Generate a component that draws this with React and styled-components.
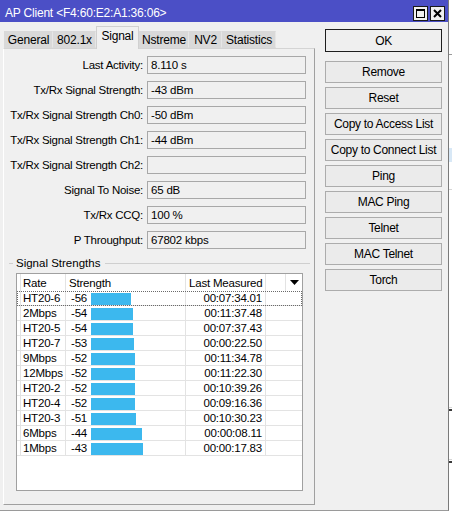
import React from "react";
import styled, { createGlobalStyle } from "styled-components";

const GlobalStyle = createGlobalStyle`
  html, body {
    margin: 0;
    padding: 0;
    background: #ffffff;
  }
  body {
    font-family: "Liberation Sans", Arial, sans-serif;
    font-size: 11px;
    color: #000;
  }
`;

const Desktop = styled.div`
  display: flex;
  width: 452px;
  height: 511px;
  overflow: hidden;
`;

const Window = styled.div`
  display: flex;
  flex-direction: column;
  width: 448px;
  height: 510px;
  background: #f0f0f0;
  border-right: 1px solid #7a7a7a;
  border-bottom: 1px solid #9a9a9a;
`;

const Behind = styled.div`
  flex: 1;
  display: flex;
  flex-direction: column;
  background: #ffffff;
`;

const BehindLine = styled.div`
  margin-top: ${p => p.$top}px;
  height: ${p => p.$h || 1}px;
  background: ${p => p.$color};
`;

const TitleBar = styled.div`
  display: flex;
  align-items: center;
  height: 22px;
  padding: 0 3px 0 5px;
  background: #4b4fc6;
  color: #fff;
  font-size: 12px;
`;

const TitleText = styled.div`
  flex: 1;
  padding-top: 3px;
  white-space: nowrap;
  letter-spacing: -0.2px;
`;

const TitleButton = styled.div`
  width: 13px;
  height: 13px;
  margin-top: 5px;
  margin-left: 2px;
  border: 1px solid #1a1a1a;
  background: #f0f0f0;
  display: flex;
  align-items: center;
  justify-content: center;
`;

const Body = styled.div`
  flex: 1;
  display: flex;
`;

const LeftPane = styled.div`
  display: flex;
  flex-direction: column;
  width: 312px;
  margin-left: 3px;
`;

const TabStrip = styled.div`
  display: flex;
  align-items: flex-end;
  height: 22px;
  margin-top: 4px;
  padding-left: 1px;
  position: relative;
  z-index: 1;
`;

const Tab = styled.div`
  box-sizing: border-box;
  width: ${p => p.$w}px;
  height: ${p => (p.$active ? 23 : 17)}px;
  margin-bottom: ${p => (p.$active ? -1 : 0)}px;
  display: flex;
  align-items: center;
  justify-content: center;
  padding-bottom: ${p => (p.$active ? 4 : 0)}px;
  background: ${p => (p.$active ? "#f0f0f0" : "#d9d9d9")};
  border: 1px solid ${p => (p.$active ? "#d0d0d0" : "#d9d9d9")};
  border-bottom: ${p => (p.$active ? "none" : "1px solid #d9d9d9")};
  border-right: 1px solid ${p => (p.$active ? "#d0d0d0" : "#e6e6e6")};
  font-size: 12px;
  letter-spacing: -0.2px;
  white-space: nowrap;
`;

const Panel = styled.div`
  box-sizing: border-box;
  height: 457px;
  border: 1px solid #d4d4d4;
  border-left-color: #ffffff;
  border-right-color: #a0a0a0;
  border-bottom-color: #a0a0a0;
  padding: 7px 0 0 3px;
  display: flex;
  flex-direction: column;
`;

const FieldList = styled.div`
  display: flex;
  flex-direction: column;
  gap: 7px;
`;

const FieldRow = styled.div`
  display: flex;
  align-items: center;
  height: 18px;
`;

const FieldLabel = styled.div`
  width: 136px;
  text-align: right;
  white-space: nowrap;
  font-size: 11.5px;
  letter-spacing: -0.25px;
`;

const FieldBox = styled.div`
  box-sizing: border-box;
  margin-left: 4px;
  width: 159px;
  height: 18px;
  border: 1px solid #a8a8a8;
  background: #f0f0f0;
  padding: 0 3px;
  display: flex;
  align-items: center;
  font-size: 11.5px;
  letter-spacing: -0.2px;
  white-space: nowrap;
`;

const Group = styled.div`
  margin-top: 7px;
  display: flex;
  flex-direction: column;
`;

const Legend = styled.div`
  display: flex;
  align-items: center;
  height: 14px;
  padding-left: 2px;
  margin-right: 4px;
  font-size: 11.5px;
  white-space: nowrap;
  &::before {
    content: "";
    flex: none;
    width: 4px;
    height: 1px;
    background: #cfcfcf;
    margin-right: 3px;
  }
  &::after {
    content: "";
    flex: 1;
    height: 1px;
    background: #cfcfcf;
    margin-left: 5px;
  }
`;

const Table = styled.div`
  box-sizing: border-box;
  margin: 3px 0 0 9px;
  width: 287px;
  height: 218px;
  border: 1px solid #a0a0a0;
  background: #fff;
  display: flex;
  flex-direction: column;
`;

const HeaderRow = styled.div`
  display: flex;
  height: 17px;
`;

const DataRow = styled.div`
  display: flex;
  height: 15px;
  position: relative;
  ${p =>
    p.$focused &&
    `&::after {
      content: "";
      position: absolute;
      left: 0;
      right: 0;
      top: 0;
      bottom: 0;
      border: 1px dotted #6a6a6a;
      pointer-events: none;
    }`}
`;

const Cell = styled.div`
  box-sizing: border-box;
  width: ${p => p.$w}px;
  flex: ${p => (p.$grow ? 1 : "none")};
  display: flex;
  align-items: center;
  justify-content: ${p => (p.$right ? "flex-end" : "flex-start")};
  padding: ${p => (p.$right ? "0 3px 0 0" : `0 0 0 ${p.$pad ?? 2}px`)};
  border-right: ${p => (p.$last ? "none" : "1px solid #e3e3e3")};
  border-bottom: ${p => (p.$header ? "none" : "1px solid #e3e3e3")};
  white-space: nowrap;
  font-size: 11.5px;
  letter-spacing: -0.2px;
`;

const Value = styled.span`
  width: 20px;
`;

const Bar = styled.div`
  height: 12px;
  margin-top: 1px;
  background: #3cb8ee;
`;

const RightPane = styled.div`
  display: flex;
  flex-direction: column;
  gap: 4px;
  margin-left: 10px;
  padding-top: 7px;
`;

const Button = styled.div`
  box-sizing: border-box;
  width: 117px;
  height: ${p => (p.$default ? 23 : 22)}px;
  margin-bottom: ${p => (p.$default ? 5 : 0)}px;
  border: 1px solid ${p => (p.$default ? "#1e1e1e" : "#acacac")};
  background: ${p => (p.$default ? "#efefef" : "#ebebeb")};
  display: flex;
  align-items: center;
  justify-content: center;
  font-size: 12px;
  letter-spacing: -0.3px;
  white-space: nowrap;
`;

const tabs = [
  ["General", 49],
  ["802.1x", 43],
  ["Signal", 43],
  ["Nstreme", 50],
  ["NV2", 33],
  ["Statistics", 54],
];

const fields = [
  ["Last Activity:", "8.110 s"],
  ["Tx/Rx Signal Strength:", "-43 dBm"],
  ["Tx/Rx Signal Strength Ch0:", "-50 dBm"],
  ["Tx/Rx Signal Strength Ch1:", "-44 dBm"],
  ["Tx/Rx Signal Strength Ch2:", ""],
  ["Signal To Noise:", "65 dB"],
  ["Tx/Rx CCQ:", "100 %"],
  ["P Throughput:", "67802 kbps"],
];

const rates = [
  ["HT20-6", -56, "00:07:34.01"],
  ["2Mbps", -54, "00:11:37.48"],
  ["HT20-5", -54, "00:07:37.43"],
  ["HT20-7", -53, "00:00:22.50"],
  ["9Mbps", -52, "00:11:34.78"],
  ["12Mbps", -52, "00:11:22.30"],
  ["HT20-2", -52, "00:10:39.26"],
  ["HT20-4", -52, "00:09:16.36"],
  ["HT20-3", -51, "00:10:30.23"],
  ["6Mbps", -44, "00:00:08.11"],
  ["1Mbps", -43, "00:00:17.83"],
];

const buttons = [
  "Remove",
  "Reset",
  "Copy to Access List",
  "Copy to Connect List",
  "Ping",
  "MAC Ping",
  "Telnet",
  "MAC Telnet",
  "Torch",
];

function SignalTable() {
  return (
    <Table>
      <HeaderRow>
        <Cell $header $w={4} $pad={0} />
        <Cell $header $w={45}>Rate</Cell>
        <Cell $header $w={120} $pad={3}>Strength</Cell>
        <Cell $header $w={80} $pad={3}>Last Measured</Cell>
        <Cell $header $w={20} />
        <Cell $header $grow $last $pad={4}>
          <svg width="9" height="5" viewBox="0 0 9 5">
            <path d="M0 0h9L4.5 5z" fill="#000" />
          </svg>
        </Cell>
      </HeaderRow>
      {rates.map(([rate, dbm, time], i) => (
        <DataRow key={rate} $focused={i === 0}>
          <Cell $w={4} $pad={0} />
          <Cell $w={45}>{rate}</Cell>
          <Cell $w={120} $pad={5}>
            <Value>{dbm}</Value>
            <Bar style={{ width: Math.round((100 + dbm) * 0.91) }} />
          </Cell>
          <Cell $w={80} $right>{time}</Cell>
          <Cell $grow $last />
        </DataRow>
      ))}
    </Table>
  );
}

export default function App() {
  return (
    <>
      <GlobalStyle />
      <Desktop>
        <Window>
          <TitleBar>
            <TitleText>AP Client &lt;F4:60:E2:A1:36:06&gt;</TitleText>
            <TitleButton>
              <svg width="9" height="9" viewBox="0 0 9 9">
                <rect x="0.5" y="0.5" width="8" height="8" fill="none" stroke="#000" />
                <rect x="0.5" y="0.5" width="8" height="1.5" fill="#000" />
              </svg>
            </TitleButton>
            <TitleButton>
              <svg width="9" height="9" viewBox="0 0 9 9">
                <path d="M1 1l7 7M8 1l-7 7" stroke="#000" strokeWidth="2" />
              </svg>
            </TitleButton>
          </TitleBar>
          <Body>
            <LeftPane>
              <TabStrip>
                {tabs.map(([name, w]) => (
                  <Tab key={name} $w={w} $active={name === "Signal"}>
                    {name}
                  </Tab>
                ))}
              </TabStrip>
              <Panel>
                <FieldList>
                  {fields.map(([label, value]) => (
                    <FieldRow key={label}>
                      <FieldLabel>{label}</FieldLabel>
                      <FieldBox>{value}</FieldBox>
                    </FieldRow>
                  ))}
                </FieldList>
                <Group>
                  <Legend>Signal Strengths</Legend>
                  <SignalTable />
                </Group>
              </Panel>
            </LeftPane>
            <RightPane>
              <Button $default>OK</Button>
              {buttons.map(b => (
                <Button key={b}>{b}</Button>
              ))}
            </RightPane>
          </Body>
        </Window>
        <Behind>
          <BehindLine $top={54} $color="#9a9a9a" />
          <BehindLine $top={93} $h={14} $color="#d8e8f6" />
          <BehindLine $top={27} $color="#d6d6d6" />
          <BehindLine $top={217} $color="#d6d6d6" />
          <BehindLine $top={1} $h={2} $color="#3a3a3a" />
          <BehindLine $top={48} $color="#d6d6d6" />
          <BehindLine $top={1} $h={2} $color="#3a3a3a" />
        </Behind>
      </Desktop>
    </>
  );
}
